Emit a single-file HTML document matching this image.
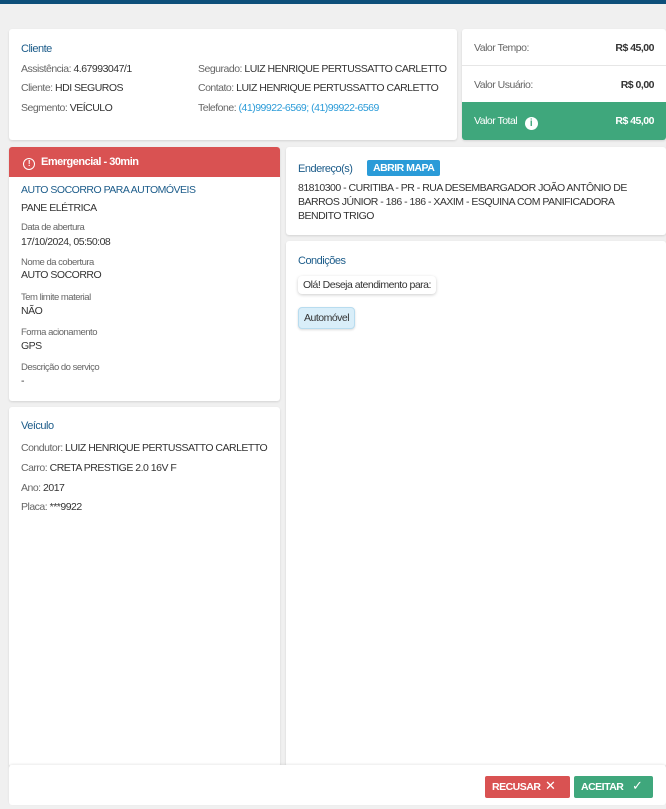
<!DOCTYPE html><html><head><meta charset="utf-8"><style>
*{margin:0;padding:0;box-sizing:border-box}
body{width:666px;height:809px;background:#f0f0f0;font-family:"Liberation Sans",sans-serif;font-size:10.5px;color:#333;position:relative;overflow:hidden;letter-spacing:-0.5px}
.c{position:absolute;background:#fff;border-radius:3px;box-shadow:0 1px 2px rgba(0,0,0,.12)}
.a{position:absolute;white-space:nowrap}
.g{color:#666}.t{color:#1c5c8a;font-size:11px}
.b{color:#2a9bd8}
</style></head><body>
<div style="position:absolute;left:0;top:0;width:666px;height:4px;background:#0e4f7a"></div>
<div class="c" style="left:9px;top:29px;width:448px;height:111px">
<div class="a t" style="left:12px;top:14px">Cliente</div>
<div class="a" style="left:12px;top:34px"><span class="g">Assistência:</span> 4.67993047/1</div>
<div class="a" style="left:12px;top:53px"><span class="g">Cliente:</span> HDI SEGUROS</div>
<div class="a" style="left:12px;top:73px"><span class="g">Segmento:</span> VEÍCULO</div>
<div class="a" style="left:189px;top:34px"><span class="g">Segurado:</span> LUIZ HENRIQUE PERTUSSATTO CARLETTO</div>
<div class="a" style="left:189px;top:53px"><span class="g">Contato:</span> LUIZ HENRIQUE PERTUSSATTO CARLETTO</div>
<div class="a" style="left:189px;top:73px"><span class="g">Telefone:</span> <span class="b">(41)99922-6569; (41)99922-6569</span></div>
</div>
<div class="c" style="left:462px;top:29px;width:204px;height:111px;overflow:hidden">
<div class="a g" style="left:12px;top:13px">Valor Tempo:</div><div class="a" style="right:12px;top:13px;font-weight:bold">R$ 45,00</div>
<div style="position:absolute;left:0;top:36px;width:100%;height:1px;background:#e6e6e6"></div>
<div class="a g" style="left:12px;top:50px">Valor Usuário:</div><div class="a" style="right:12px;top:50px;font-weight:bold">R$ 0,00</div>
<div style="position:absolute;left:0;top:73px;width:100%;height:38px;background:#3fa77c;color:#fff">
<div class="a" style="left:12px;top:13px">Valor Total <span style="display:inline-block;width:13px;height:13px;border-radius:50%;background:#fff;color:#3fa77c;font-size:10px;font-weight:bold;text-align:center;line-height:13px;margin-left:5px;vertical-align:-2px">i</span></div>
<div class="a" style="right:12px;top:13px;font-weight:bold">R$ 45,00</div></div>
</div>
<div class="c" style="left:9px;top:147px;width:271px;height:254px;overflow:hidden">
<div style="height:30px;background:#d95252;color:#fff;font-weight:bold;font-size:11px;padding:9px 0 0 14px"><span style="display:inline-block;width:12px;height:12px;border:1.3px solid #fff;border-radius:50%;font-size:8px;text-align:center;line-height:10px;vertical-align:-1px;margin-right:6px">!</span>Emergencial - 30min</div>
<div class="a t" style="left:12px;top:37px;font-size:10.5px">AUTO SOCORRO PARA AUTOMÓVEIS</div>
<div class="a" style="left:12px;top:55px">PANE ELÉTRICA</div>
<div class="a g" style="left:12px;top:75px;font-size:9.5px">Data de abertura</div><div class="a" style="left:12px;top:89px">17/10/2024, 05:50:08</div>
<div class="a g" style="left:12px;top:110px;font-size:9.5px">Nome da cobertura</div><div class="a" style="left:12px;top:122px">AUTO SOCORRO</div>
<div class="a g" style="left:12px;top:145px;font-size:9.5px">Tem limite material</div><div class="a" style="left:12px;top:158px">NÃO</div>
<div class="a g" style="left:12px;top:180px;font-size:9.5px">Forma acionamento</div><div class="a" style="left:12px;top:193px">GPS</div>
<div class="a g" style="left:12px;top:215px;font-size:9.5px">Descrição do serviço</div><div class="a" style="left:12px;top:228px">-</div>
</div>
<div class="c" style="left:9px;top:407px;width:271px;height:360px">
<div class="a t" style="left:12px;top:13px">Veículo</div>
<div class="a" style="left:12px;top:35px"><span class="g">Condutor:</span> LUIZ HENRIQUE PERTUSSATTO CARLETTO</div>
<div class="a" style="left:12px;top:55px"><span class="g">Carro:</span> CRETA PRESTIGE 2.0 16V F</div>
<div class="a" style="left:12px;top:75px"><span class="g">Ano:</span> 2017</div>
<div class="a" style="left:12px;top:94px"><span class="g">Placa:</span> ***9922</div>
</div>
<div class="c" style="left:286px;top:147px;width:380px;height:88px">
<div class="a t" style="left:12px;top:16px">Endereço(s)</div>
<div class="a" style="left:81px;top:13px;background:#2a9bd8;color:#fff;font-weight:bold;font-size:10.5px;padding:2px 6px;border-radius:2px">ABRIR MAPA</div>
<div style="position:absolute;left:12px;top:34px;width:340px;line-height:14px">81810300 - CURITIBA - PR - RUA DESEMBARGADOR JOÃO ANTÔNIO DE BARROS JÚNIOR - 186 - 186 - XAXIM - ESQUINA COM PANIFICADORA BENDITO TRIGO</div>
</div>
<div class="c" style="left:286px;top:241px;width:380px;height:526px">
<div class="a t" style="left:12px;top:14px">Condições</div>
<div class="a" style="left:12px;top:35px;padding:3px 5px;border-radius:4px;box-shadow:0 1px 3px rgba(0,0,0,.2);background:#fff">Olá! Deseja atendimento para:</div>
<div class="a" style="left:12px;top:66px;padding:4px 5px;border-radius:4px;background:#d9eef9;border:1px solid #b8dcef;box-shadow:0 1px 2px rgba(0,0,0,.15)">Automóvel</div>
</div>
<div class="c" style="left:9px;top:765px;width:657px;height:40px;box-shadow:0 -1px 2px rgba(0,0,0,.08)">
<div class="a" style="left:476px;top:11px;width:85px;height:22px;background:#d95252;color:#fff;font-weight:bold;border-radius:2px;padding:5px 0 0 7px">RECUSAR <span style="font-weight:normal;font-size:13px;position:absolute;left:60px;top:2px">✕</span></div>
<div class="a" style="left:565px;top:11px;width:79px;height:22px;background:#3fa77c;color:#fff;font-weight:bold;border-radius:2px;padding:5px 0 0 7px">ACEITAR <span style="font-weight:normal;font-size:13px;position:absolute;left:58px;top:2px">✓</span></div>
</div>
</body></html>
